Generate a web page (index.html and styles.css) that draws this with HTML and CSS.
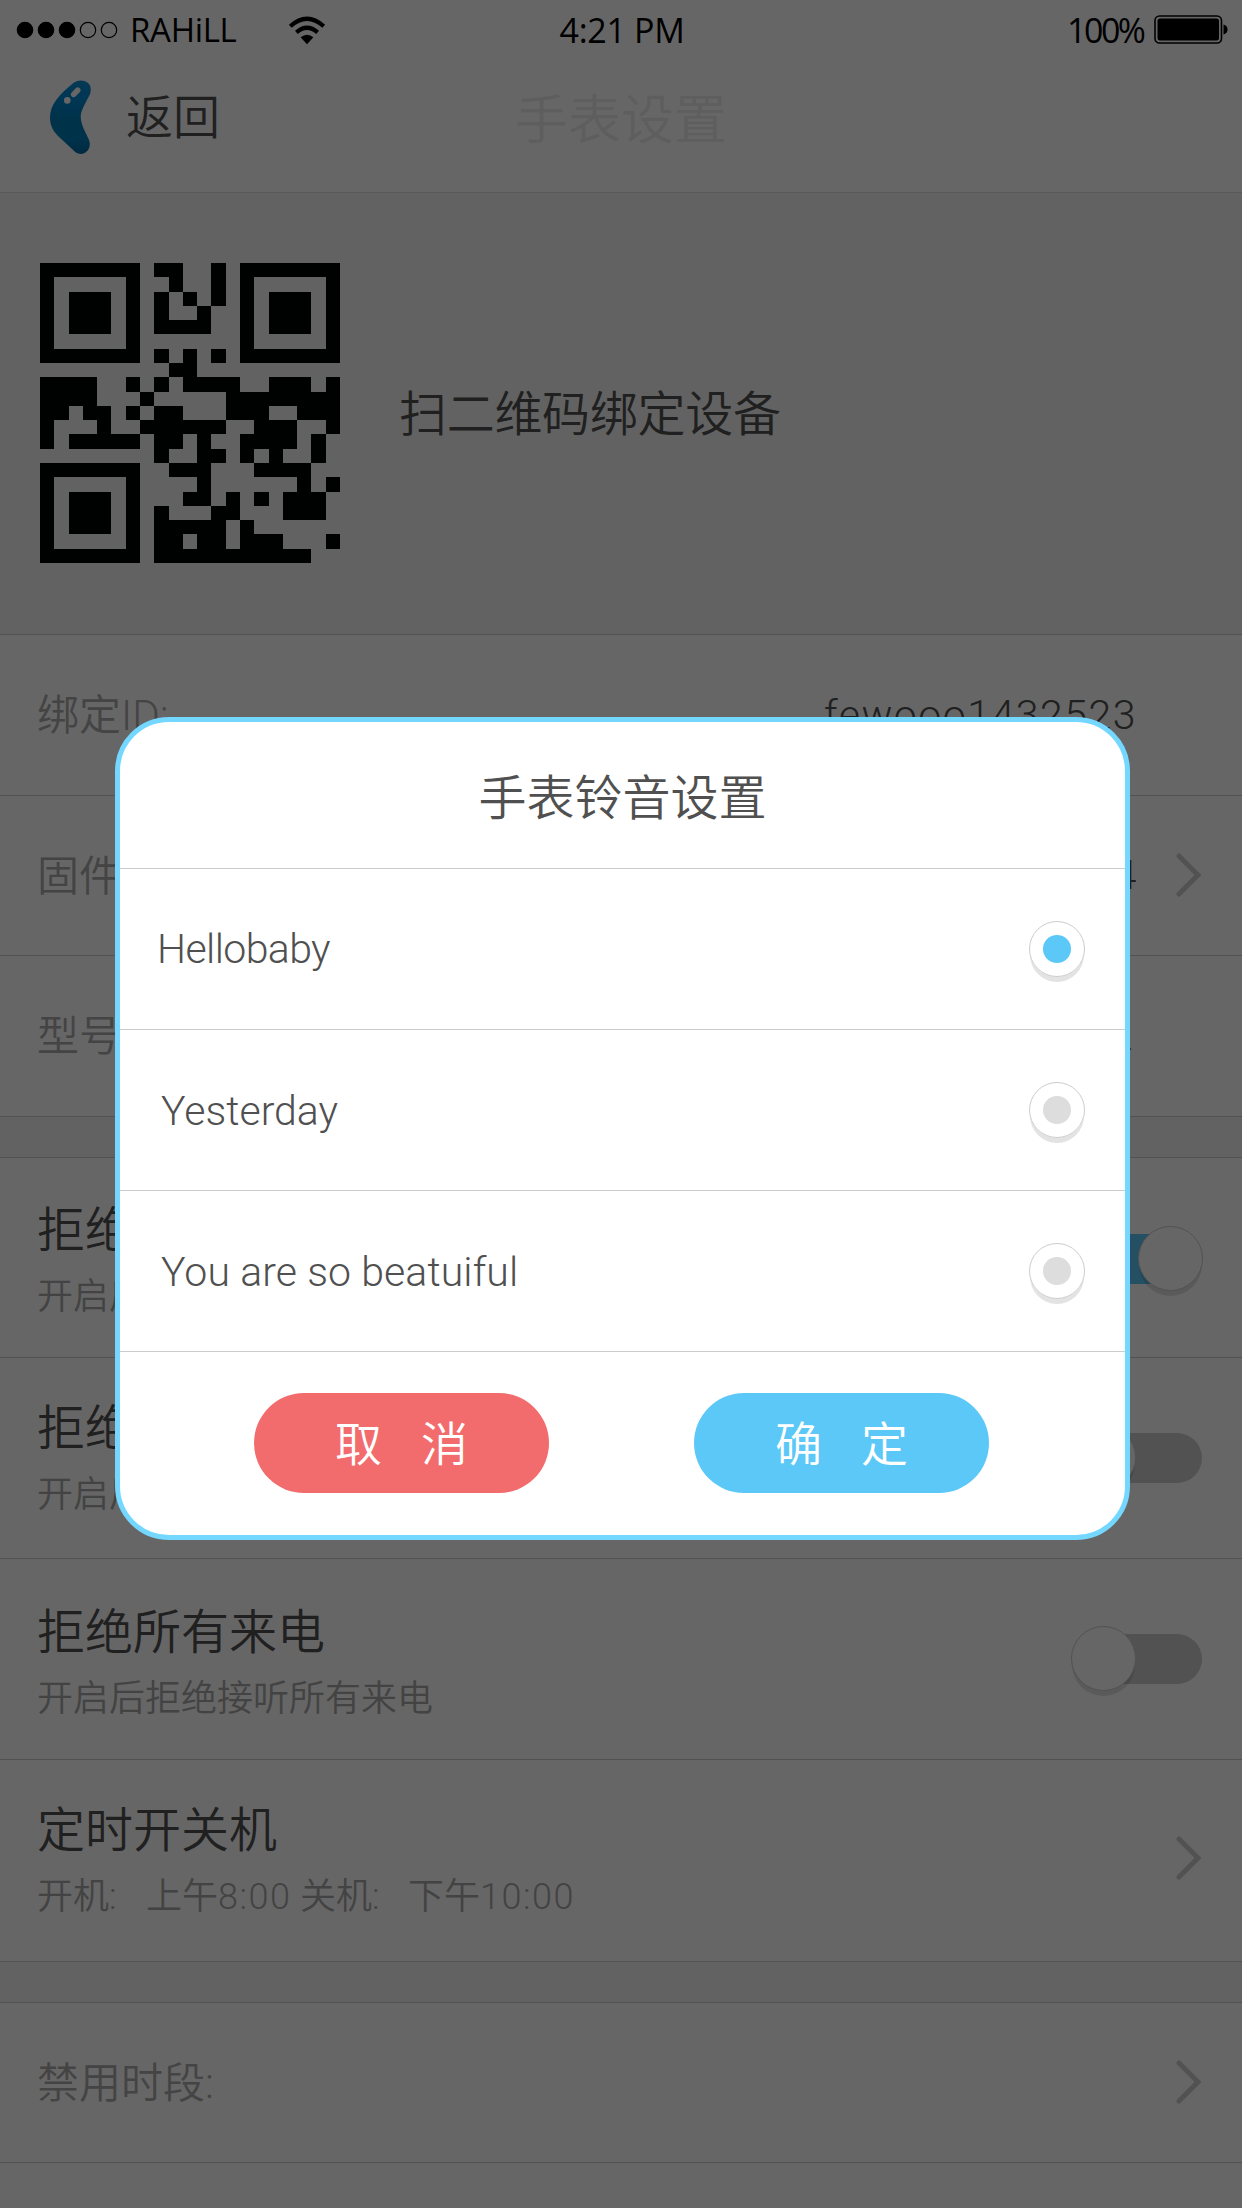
FILE: index.html
```html
<!DOCTYPE html>
<html lang="zh-CN">
<head>
<meta charset="utf-8">
<title>手表设置</title>
<link rel="stylesheet" href="styles.css">
</head>
<body>
<div class="screen">
  <header class="header">
    <div class="status">
      <div class="status-left">
        <svg class="signal" width="102" height="20" viewBox="0 0 102 20"><g stroke="#000" stroke-width="1.2"><circle cx="9" cy="10" r="7.7"/><circle cx="30" cy="10" r="7.7"/><circle cx="51" cy="10" r="7.7"/><g fill="none"><circle cx="72" cy="10" r="7.7"/><circle cx="93" cy="10" r="7.7"/></g></g></svg>
        <span class="carrier">RAHiLL</span>
        <svg class="wifi" width="38" height="30" viewBox="0 0 38 30"><g fill="none" stroke="#000" stroke-width="4.2"><path d="M2.3 11.2Q19 -3.8 35.700 11.200"/><path d="M8.400 17.400Q19 8.200 29.600 17.400"/></g><path d="M12.600 22.200Q19 17.200 25.400 22.200L19 29.300Z"/></svg>
      </div>
      <span class="clock">4:21 PM</span>
      <div class="status-right">
        <span class="percent">100%</span>
        <svg class="battery" width="75" height="30" viewBox="0 0 75 30"><rect x="1" y="1" width="66.500" height="27" rx="4.500" fill="none" stroke="#000" stroke-width="1.600"/><rect x="3.500" y="3.500" width="61.500" height="22" rx="2.500"/><path d="M69.500 9.500q4 1 4 5t-4 5z"/></svg>
      </div>
    </div>
    <div class="nav">
      <div class="back">
        <svg width="42" height="75" viewBox="0 0 42 75"><defs><linearGradient id="bean" x1="0" y1="0" x2="0" y2="1"><stop offset="0" stop-color="#0e8fd2"/><stop offset=".25" stop-color="#0089d2"/><stop offset=".5" stop-color="#007dba"/><stop offset=".8" stop-color="#007dba"/><stop offset="1" stop-color="#0067a4"/></linearGradient></defs><path d="M24 2.500C29 -1 36 0 39.500 4.500C42 9 40.500 14 38 18C35 24 30.700 31 30.700 37C31 45 36 53 39 60C42 68 36 74 31 74C27 74 24 71 21 68L8 56C3 51 0 45 0 38C0 24 9 15 24 2.500Z" fill="url(#bean)"/><circle cx="17.300" cy="20.400" r="3.300" fill="#fff"/><path d="M23.700 14.400L27.700 10.300" stroke="#fff" stroke-width="5.600" stroke-linecap="round"/></svg>
        <span>返回</span>
      </div>
      <h1 class="nav-title">手表设置</h1>
    </div>
  </header>

  <section class="bind">
    <svg class="qr" width="300" height="300" viewBox="0 0 21 21" shape-rendering="crispEdges"><path d="M0 0h7v7h-7zM14 0h7v7h-7zM0 14h7v7h-7z"/><path class="qr-gap" d="M1 1h5v5h-5zM15 1h5v5h-5zM1 15h5v5h-5z"/><path d="M2 2h3v3h-3zM16 2h3v3h-3zM2 16h3v3h-3z"/><path d="M8 0h2v1h-2zM12 0h1v3h-1zM9 1h1v1h-1zM8 2h1v3h-1zM10 2h1v1h-1zM11 3h1v2h-1zM9 4h2v1h-2zM8 6h1v1h-1zM10 6h1v3h-1zM12 6h1v1h-1zM9 7h1v1h-1zM0 8h4v2h-4zM6 8h1v1h-1zM8 8h1v1h-1zM11 8h3v1h-3zM16 8h3v1h-3zM20 8h1v4h-1zM7 9h1v1h-1zM13 9h7v1h-7zM0 10h2v1h-2zM3 10h2v1h-2zM6 10h1v1h-1zM8 10h2v3h-2zM13 10h3v1h-3zM18 10h2v1h-2zM0 11h1v2h-1zM4 11h1v1h-1zM7 11h1v1h-1zM10 11h3v1h-3zM15 11h3v2h-3zM2 12h5v1h-5zM11 12h1v5h-1zM14 12h1v2h-1zM19 12h1v2h-1zM8 13h1v1h-1zM12 13h1v1h-1zM16 13h1v1h-1zM9 14h2v1h-2zM15 14h4v1h-4zM18 15h1v1h-1zM20 15h1v1h-1zM10 16h1v1h-1zM13 16h1v2h-1zM15 16h1v1h-1zM17 16h3v2h-3zM8 17h1v1h-1zM12 17h1v1h-1zM8 18h5v1h-5zM14 18h1v2h-1zM8 19h2v1h-2zM11 19h2v1h-2zM15 19h2v1h-2zM20 19h1v1h-1zM8 20h11v1h-11z"/></svg>
    <span class="bind-text">扫二维码绑定设备</span>
  </section>

  <ul class="list">
    <li class="row"><span class="label">绑定<i>ID:</i></span><span class="value">fewooo1432523</span></li>
    <li class="row"><span class="label">固件版本:</span><span class="value tight">1.01.4</span><svg class="chevron" width="26" height="44" viewBox="0 0 26 44"><path d="M3 3L22 22L3 41"/></svg></li>
    <li class="row"><span class="label">型号:</span><span class="value foot">W1</span></li>
  </ul>

  <ul class="list spaced">
    <li class="row tall first"><div><p class="title">拒绝陌生来电</p><p class="sub">开启后拒绝陌生来电</p></div><span class="switch on"><span class="knob"></span></span></li>
    <li class="row tall second"><div><p class="title">拒绝亲情来电</p><p class="sub">开启后拒绝亲情来电</p></div><span class="switch"><span class="knob"></span></span></li>
    <li class="row tall third"><div><p class="title">拒绝所有来电</p><p class="sub">开启后拒绝接听所有来电</p></div><span class="switch"><span class="knob"></span></span></li>
    <li class="row tall fourth"><div><p class="title">定时开关机</p><p class="sub times"><span>开机:</span><span>上午<i>8:00</i></span><span>关机:</span><span>下午<i>10:00</i></span></p></div><svg class="chevron" width="26" height="44" viewBox="0 0 26 44"><path d="M3 3L22 22L3 41"/></svg></li>
  </ul>

  <ul class="list spaced">
    <li class="row"><span class="label">禁用时段:</span><svg class="chevron" width="26" height="44" viewBox="0 0 26 44"><path d="M3 3L22 22L3 41"/></svg></li>
    <li class="row"></li>
  </ul>

  <div class="overlay">
    <div class="dialog">
      <h2 class="dialog-title">手表铃音设置</h2>
      <div class="option"><span class="o1">Hellobaby</span><span class="radio checked"></span></div>
      <div class="option"><span class="o2">Yesterday</span><span class="radio"></span></div>
      <div class="option"><span class="o3">You are so beatuiful</span><span class="radio"></span></div>
      <div class="actions"><button class="btn cancel"><span>取</span><span>消</span></button><button class="btn ok"><span>确</span><span>定</span></button></div>
    </div>
  </div>
</div>
</body>
</html>
```
FILE: styles.css
```css
* { box-sizing: border-box; margin: 0; padding: 0; }
body {
  width: 1242px;
  height: 2208px;
  overflow: hidden;
  font-family: Roboto, "Noto Sans CJK SC", sans-serif;
  font-weight: 350;
  color: #505050;
}
i { font-style: normal; }
ul { list-style: none; }
svg { display: block; flex: none; }

.screen {
  position: relative;
  width: 1242px;
  height: 2208px;
  overflow: hidden;
  background: #f5f5f5;
}

.header {
  height: 193px;
  background: #fff;
  border-bottom: 1px solid #dedede;
}
.status {
  display: grid;
  grid-template-columns: 1fr auto 1fr;
  height: 60px;
  align-items: center;
  padding: 0 13px 0 16px;
  font-family: "Open Sans", "Noto Sans", sans-serif;
  font-weight: 400;
  font-size: 34px;
  line-height: 60px;
  color: #000;
  white-space: nowrap;
}
.status-left, .status-right { display: flex; align-items: center; }
.status-right { justify-content: flex-end; }
.carrier { width: 106px; margin-left: 12px; font-size: 33px; letter-spacing: -.3px; }
.wifi { margin-left: 52px; }
.clock { width: 126px; letter-spacing: -.3px; }
.percent { width: 78px; margin-right: 9px; letter-spacing: -2.500px; }

.nav {
  display: grid;
  grid-template-columns: 1fr auto 1fr;
  align-items: center;
  height: 116px;
}
.back {
  display: flex;
  align-items: center;
  gap: 34px;
  padding-left: 50px;
  font-size: 47px;
  line-height: 60px;
}
.back svg { margin-bottom: 2px; }
.nav-title { margin-top: 6px; font-size: 53px; font-weight: 350; line-height: 60px; color: #ebebeb; }

.bind {
  display: flex;
  align-items: center;
  gap: 59px;
  height: 441px;
  padding-left: 40px;
}
.qr { margin-bottom: 2px; fill: #020303; }
.qr-gap { fill: #f5f5f5; }
.bind-text { margin-top: 3px; font-size: 48px; line-height: 60px; letter-spacing: -.3px; }

.list { background: #fff; border-top: 1px solid #ccc; }
.list.spaced { margin-top: 40px; }
.row {
  display: flex;
  align-items: center;
  height: 160.500px;
  padding: 0 40px 0 37px;
  border-bottom: 1px solid #ccc;
}
.label { flex: 1; margin-top: 3px; font-size: 42px; line-height: 60px; color: #aaa; }
.value { margin-right: 65px; font-size: 41px; line-height: 60px; letter-spacing: 1.500px; }
.value.tight { margin-right: 38px; }
.value.foot { font-family: "DejaVu Sans", sans-serif; }
.chevron { fill: none; stroke: #ccc; stroke-width: 5px; stroke-linecap: round; stroke-linejoin: miter; }

.row.tall { height: 201px; justify-content: space-between; }
.row.first { height: 200px; }
.row.fourth { height: 202px; }
.first div { margin-top: 13px; }
.second div { margin-top: 9px; }
.third div { margin-top: 15px; }
.fourth div { margin-top: 8px; }
.fourth .chevron { margin-bottom: 5px; }
.title { font-size: 48px; line-height: 66px; white-space: nowrap; }
.sub { font-size: 36px; line-height: 66px; color: #a8a8a8; white-space: nowrap; }
.times { display: flex; }
.times span:nth-child(1) { width: 109px; }
.times span:nth-child(2) { width: 154px; }
.times span:nth-child(3) { width: 108px; }
.times i { letter-spacing: 1.500px; }

.switch {
  width: 130px;
  height: 50px;
  border-radius: 25px;
  background: #ccc;
}
.knob {
  display: block;
  width: 65px;
  height: 65px;
  margin: -8px 0 0 -1px;
  border: 1px solid #ccc;
  border-radius: 50%;
  background: #fff;
  box-shadow: 0 6px 0 -1px rgba(0, 0, 0, .12);
}
.first .switch { margin-top: 3px; }
.switch.on { background: #5cc8f7; }
.switch.on .knob { margin-left: 66px; }

.overlay {
  position: absolute;
  inset: 0;
  padding: 717px 112px 0 115px;
  background: rgba(0, 0, 0, .6);
}
.dialog {
  height: 823px;
  border: 5px solid #73d7ff;
  border-radius: 54px;
  background: #fff;
}
.dialog-title {
  height: 147px;
  padding-top: 5px;
  border-bottom: 1px solid #ccc;
  font-size: 48px;
  font-weight: 350;
  line-height: 144px;
  text-align: center;
}
.option {
  display: flex;
  align-items: center;
  justify-content: space-between;
  height: 161px;
  padding: 0 40px 0 40px;
  border-bottom: 1px solid #ccc;
  font-size: 41px;
  line-height: 60px;
}
.o1 { margin-left: -3px; letter-spacing: -.6px; }
.o2, .o3 { margin: 2px 0 0 1px; }
.o3 { letter-spacing: .1px; }
.radio {
  display: grid;
  place-items: center;
  width: 56px;
  height: 56px;
  border: 1px solid #ccc;
  border-radius: 50%;
  box-shadow: 0 6px 0 -1px #e3e3e3;
}
.radio::before {
  content: "";
  width: 28px;
  height: 28px;
  border-radius: 50%;
  background: #ddd;
}
.radio.checked::before { background: #5cc8f7; }
.actions { display: flex; justify-content: center; gap: 145px; padding: 41px 2px 0 0; }
.btn {
  display: flex;
  align-items: center;
  justify-content: center;
  gap: 39px;
  width: 295px;
  height: 100px;
  padding-top: 4px;
  border: 0;
  border-radius: 50px;
  font: inherit;
  font-size: 47px;
  line-height: 60px;
  color: #fff;
}
.cancel { background: #f36c6d; }
.ok { background: #5cc8f7; }
```
